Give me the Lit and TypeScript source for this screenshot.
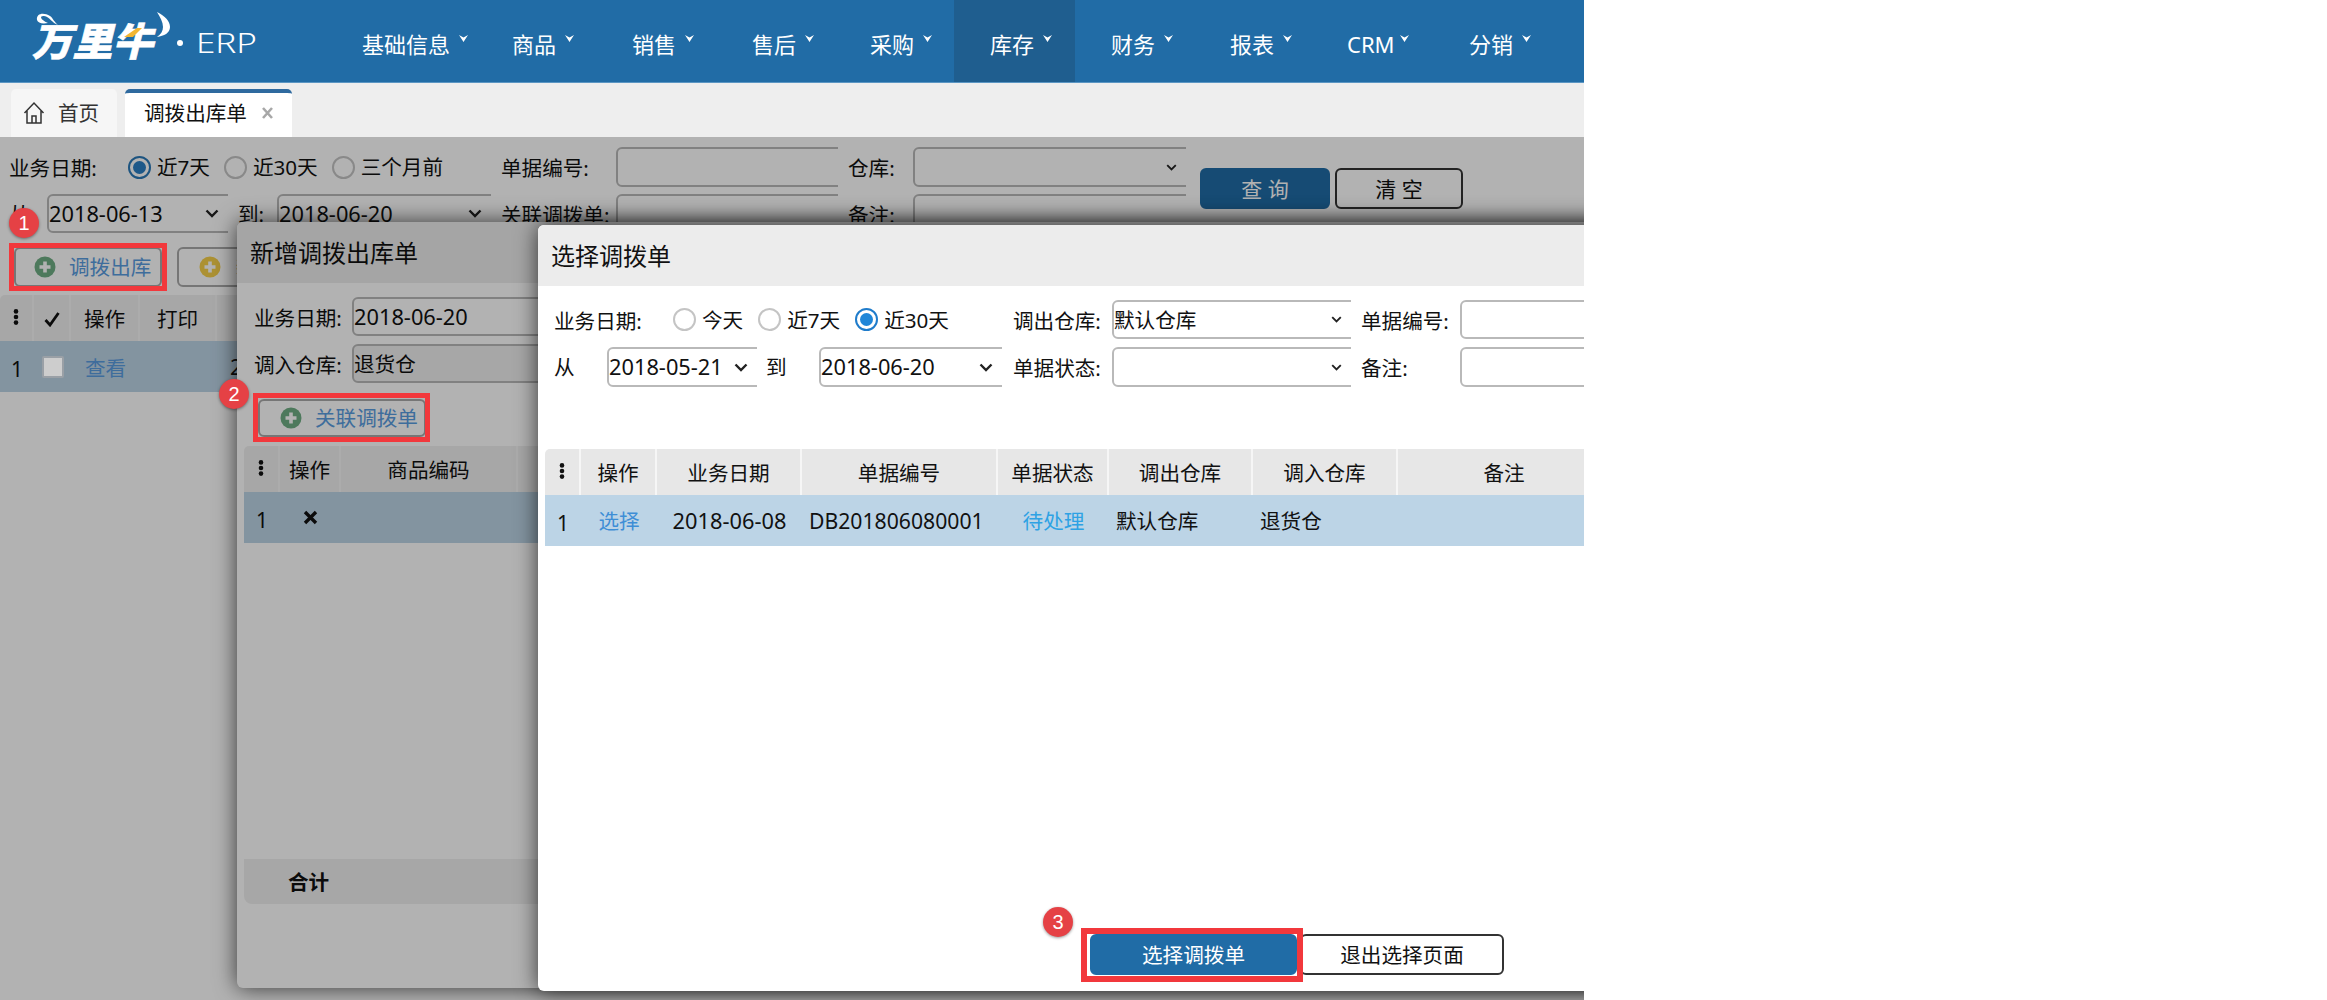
import { LitElement, html, css, svg } from "lit";
import { customElement } from "lit/decorators.js";

const NAV = [
  ["基础信息", 150], ["商品", 120], ["销售", 120], ["售后", 118], ["采购", 120],
  ["库存", 121], ["财务", 119], ["报表", 117], ["CRM", 122], ["分销", 120],
] as [string, number][];

const chev = (cls = "chev") => html`<svg class=${cls} viewBox="0 0 14 9"><path d="M1.5 1.5 7 7l5.5-5.5" fill="none" stroke="currentColor" stroke-width="2.4"/></svg>`;
const dots = html`<svg class="dots" viewBox="0 0 6 16"><circle cx="3" cy="2.4" r="2.3"/><circle cx="3" cy="8" r="2.3"/><circle cx="3" cy="13.6" r="2.3"/></svg>`;
const plus = (color: string) => html`<svg class="plus" viewBox="0 0 22 22"><circle cx="11" cy="11" r="10.5" fill=${color}/><path d="M11 5.5v11M5.5 11h11" stroke="#fff" stroke-width="3.6"/></svg>`;

@customElement("app-root")
export class AppRoot extends LitElement {
  static styles = css`
    :host { display: block; font-family: "Noto Sans", "Noto Sans CJK SC", sans-serif; font-size: 20.6px; line-height: 28px; color: #111; }
    * { box-sizing: border-box; }
    .root { position: relative; width: 1584px; height: 1000px; overflow: hidden; background: #fff; display: flex; flex-direction: column; }

    .header { height: 83px; flex: none; display: flex; background: #216ca6; border-bottom: 1px solid #5b96c3; color: #fff; }
    .brand { width: 326px; flex: none; display: flex; align-items: flex-start; }
    .logo { width: 280px; height: 70px; display: block; }
    .logo text { font-family: "Noto Sans CJK SC", sans-serif; }
    .nav { display: flex; }
    .nav-item { display: flex; padding: 29px 0 0 36px; font-size: 22px; line-height: 30px; }
    .nav-item.active { background: #1f5e8f; }
    .caret { width: 9px; height: 7px; margin: 6px 0 0 9px; flex: none; fill: #fff; }
    .caret.tight { margin-left: 5px; }

    .tabs { height: 54px; flex: none; background: #eee; display: flex; gap: 8px; padding: 6px 0 0 11px; }
    .tab { display: flex; align-items: center; border-radius: 5px 5px 0 0; }
    .tab.home { width: 106px; background: #f6f6f6; padding-left: 12px; gap: 13px; color: #333; }
    .tab.cur { width: 167px; background: #fff; border-top: 4px solid #2f6a9f; padding: 0 0 4px 19px; }
    .home-ico { width: 22px; height: 24px; }
    .close { margin-left: 14px; width: 13px; height: 14px; color: #a8a8a8; }

    .main { flex: 1; padding-top: 10px; }
    .pfilter { display: grid; grid-template-columns: 492px 115px 222px 10px 65px 273px auto; grid-template-rows: 40px 39px; row-gap: 7px; padding-left: 9px; }
    .dates { display: flex; align-items: center; }
    .lab { display: block; white-space: nowrap; align-self: center; padding-top: 2px; }
    .sp { grid-column: 4; }
    .radios { display: flex; align-items: center; gap: 14px; margin-left: 31px; }
    .radio { display: flex; align-items: center; gap: 6px; }
    .circle { width: 23px; height: 23px; border-radius: 50%; border: 2px solid #c4c4c4; background: #fff; flex: none; }
    .circle.on { border: 2px solid #1f7ccb; padding: 3px; }
    .circle.on::after { content: ""; display: block; width: 13px; height: 13px; border-radius: 50%; background: #1f86d8; }
    .circle.page.on { border-color: #2a79b8; }
    .circle.page.on::after { background: #2a7fc4; }

    .clip { overflow: hidden; }
    .box { height: 100%; width: calc(100% + 12px); border: 2px solid #b9b9b9; border-radius: 6px; background: #fff; display: flex; align-items: center; padding: 0 19px 0 0; justify-content: space-between; font-size: 21.8px; white-space: nowrap; }
    .box.cjk { font-size: 20.6px; }
    .box.off { background: #f0f0f0; }
    .chev { width: 14px; height: 9px; color: #222; flex: none; }
    .chev.thin { width: 11px; height: 7px; }
    .bb { margin-left: 14px; grid-column: 7; grid-row: 1 / span 2; display: flex; gap: 5px; align-items: flex-start; padding-top: 21px; }
    .btn { height: 41px; border-radius: 6px; border: 2px solid #333; background: #fff; display: flex; align-items: center; justify-content: center; flex: none; }
    .btn.pri { background: #206ca6; border-color: #206ca6; color: #fff; }
    .q { width: 130px; font-size: 21px; }
    .c { width: 128px; font-size: 21px; }

    .acts { display: flex; gap: 15px; margin: 14px 0 8px 14px; height: 40px; }
    .act { display: flex; align-items: center; gap: 13px; border: 2px solid #aaa; border-radius: 6px; background: #fff; color: #5a9ce0; padding-left: 18px; height: 100%; flex: none; }
    .act.w1 { width: 148px; }
    .act.w2 { width: 160px; color: #111; padding-left: 20px; gap: 15px; }
    .plus { width: 22px; height: 22px; flex: none; }

    .grid { display: grid; align-items: stretch; }
    .g1 { grid-template-columns: 34px 37px 69px 77px 1fr; }
    .g2 { grid-template-columns: 36px 61px 177px 1fr; }
    .g3 { grid-template-columns: 36px 76px 145px 196px 111px 144px 145px 214px; }
    .thead { height: 46px; background: #f0f0f0; border-radius: 5px 5px 0 0; }
    .g3.thead { background: #e7e7e7; }
    .thead > div { display: flex; align-items: center; justify-content: center; border-right: 2px solid #f6f6f6; padding-top: 2px; }
    .tbody { height: 51px; background: #bcd4e6; }
    .tbody > div { display: flex; align-items: center; justify-content: center; white-space: nowrap; overflow: hidden; }
    .tbody > .l { justify-content: flex-start; padding-left: 7px; }
    .tbody .num { font-size: 21.8px; }
    .tbody .db { font-size: 21.2px; }
    .link { color: #3e8ed6; }
    .link.p { color: #5a9ce0; padding-top: 2px; }
    .link.st { color: #2ea2e4; }
    .dots { width: 6px; height: 16px; fill: #111; margin-top: -5px; }
    .tick { width: 16px; height: 16px; }
    .cb { position: relative; z-index: 3; width: 22px; height: 22px; background: #cdcdcd; border: 2px solid #9aa0a6; border-radius: 2px; }
    .x { width: 15px; height: 15px; }
    .rownum { font-size: 21px; padding-top: 4px; }

    .overlay { position: absolute; left: 0; right: 0; top: 137px; bottom: 0; background: rgba(0, 0, 0, .3); z-index: 2; }
    .dlg { position: absolute; background: #fff; border-radius: 6px; box-shadow: 0 0 22px rgba(0, 0, 0, .7); display: flex; flex-direction: column; }
    .d1 { left: 237px; top: 222px; width: 1400px; height: 766px; z-index: 1; }
    .d2 { left: 538px; top: 225px; width: 1100px; height: 766px; z-index: 3; }
    .title { height: 61px; flex: none; background: #ececec; font-size: 24px; display: flex; align-items: center; padding-left: 13px; border-radius: 6px 6px 0 0; }
    .dform1 { display: grid; grid-template-columns: 98px 300px; grid-template-rows: 39px 39px; gap: 8px 0; margin: 14px 0 0 17px; }
    .act.a3 { width: 168px; height: 38px; margin: 16px 0 9px 21px; gap: 13px; padding-left: 20px; }
    .t1 { margin-left: 7px; }
    .sum { margin: auto 0 84px 7px; height: 45px; background: #f0f0f0; border-radius: 0 0 0 8px; padding: 0 0 0 44px; display: flex; align-items: center; font-weight: 700; }

    .dform2 { display: grid; grid-template-columns: 459px 99px 239px 10px 99px 140px; grid-template-rows: 39px 40px; row-gap: 8px; margin: 14px 0 0 16px; }
    .dates .from { width: 53px; flex: none; }
    .to2 { margin-left: 9px; width: 53px; flex: none; }
    .to1 { margin-left: 10px; width: 39px; flex: none; }
    .from1 { width: 38px; flex: none; }
    .s181 { width: 181px; height: 100%; flex: none; }
    .s214 { width: 214px; height: 100%; flex: none; }
    .s150 { width: 150px; height: 100%; flex: none; }
    .s183 { width: 183px; height: 100%; flex: none; }
    .radios.d { margin-left: 33px; gap: 15px; }
    .lbl4 { width: 86px; flex: none; }
    .t3 { margin: 62px 0 0 7px; }
    .foot { margin: auto 0 16px 552px; display: flex; gap: 3px; }
    .sel { width: 207px; }
    .ext { width: 204px; }

    .mark { position: absolute; border: 5px solid #f2383c; z-index: 4; }
    .m1 { left: 9px; top: 243px; width: 158px; height: 48px; }
    .m2 { left: 253px; top: 393px; width: 177px; height: 49px; }
    .m3 { left: 1081px; top: 928px; width: 222px; height: 54px; border-width: 6px; }
    .badge { position: absolute; width: 30px; height: 30px; border-radius: 50%; background: #e54145; color: #fff; z-index: 5; display: flex; align-items: center; justify-content: center; font-size: 20px; box-shadow: 0 1px 3px rgba(0, 0, 0, .4); font-family: "Liberation Sans", sans-serif; }
    .b1 { left: 9px; top: 208px; }
    .b2 { left: 219px; top: 379px; }
    .b3 { left: 1043px; top: 907px; }
  `;

  private logo() {
    return svg`
      <svg class="logo" viewBox="0 0 280 70">
        <path d="M37 20C36 13 44 12 50 16c3 2 4 6 8 9-6-2-8-8-14-9-4-.5-5 3 4 7-6 1-10 0-11-3z" fill="#fff"/>
        <g transform="translate(32 56) skewX(-14)">
          <text x="0" y="0" font-size="39" font-weight="900" fill="#fff" stroke="#fff" stroke-width=".6" textLength="121" lengthAdjust="spacingAndGlyphs">万里牛</text>
        </g>
        <path d="M124 37l13-9h5l-9 9z" fill="#f2b632"/>
        <path d="M157 12c8 4 13 9 13 15 0 6-6 9-13 10 4-3 6-6 6-10 0-5-3-10-6-15z" fill="#fff"/>
        <circle cx="180" cy="43" r="3" fill="#fff"/>
        <text x="196" y="53" font-size="28" fill="#fff" textLength="61" lengthAdjust="spacingAndGlyphs" style="font-family:'Noto Sans',sans-serif;font-weight:300">ERP</text>
      </svg>`;
  }

  render() {
    return html`
      <div class="root">
        <div class="header">
          <div class="brand">${this.logo()}</div>
          <div class="nav">
            ${NAV.map(([t, w]) => html`
              <div class="nav-item ${t === "库存" ? "active" : ""}" style="width:${w}px">
                <span>${t}</span>
                <svg class="caret ${t === "CRM" ? "tight" : ""}" viewBox="0 0 9 7"><path d="M0 0l4.5 2.4L9 0 4.5 7z"/></svg>
              </div>`)}
          </div>
        </div>
        <div class="tabs">
          <div class="tab home">
            <svg class="home-ico" viewBox="0 0 22 24" fill="none" stroke="#333" stroke-width="1.5"><path d="M1.5 12 11 2l9.5 10M4 10v12h14V10M9 22v-7h4v7"/></svg>
            <span>首页</span>
          </div>
          <div class="tab cur">
            <span>调拨出库单</span>
            <svg class="close" viewBox="0 0 13 14"><path d="M2 2l9 10M11 2 2 12" stroke="currentColor" stroke-width="2.6"/></svg>
          </div>
        </div>

        <div class="main">
          <div class="pfilter">
            <div class="dates">
              <span class="lab">业务日期:</span>
              <div class="radios">
                <label class="radio"><span class="circle page on"></span>近7天</label>
                <label class="radio"><span class="circle page"></span>近30天</label>
                <label class="radio"><span class="circle page"></span>三个月前</label>
              </div>
            </div>
            <span class="lab">单据编号:</span>
            <div class="clip"><div class="box"></div></div>
            <span class="sp"></span>
            <span class="lab">仓库:</span>
            <div class="clip"><div class="box"><span></span>${chev("chev thin")}</div></div>
            <div class="bb">
              <div class="btn pri q">查 询</div>
              <div class="btn c">清 空</div>
            </div>
            <div class="dates">
              <span class="from1">从</span>
              <div class="clip s181"><div class="box"><span>2018-06-13</span>${chev()}</div></div>
              <span class="to1">到:</span>
              <div class="clip s214"><div class="box"><span>2018-06-20</span>${chev()}</div></div>
            </div>
            <span class="lab">关联调拨单:</span>
            <div class="clip"><div class="box"></div></div>
            <span class="sp"></span>
            <span class="lab">备注:</span>
            <div class="clip"><div class="box"></div></div>
          </div>
          <div class="acts">
            <div class="act w1">${plus("#6fae84")}<span>调拨出库</span></div>
            <div class="act w2">${plus("#f6d04a")}<span>新增</span></div>
          </div>
          <div class="grid g1 thead">
            <div>${dots}</div>
            <div><svg class="tick" viewBox="0 0 16 16"><path d="M1.5 9 6 14 14.5 2" fill="none" stroke="#111" stroke-width="2.8"/></svg></div>
            <div>操作</div><div>打印</div><div></div>
          </div>
          <div class="grid g1 tbody">
            <div class="rownum">1</div>
            <div><span class="cb"></span></div>
            <div class="link p">查看</div><div></div>
            <div class="l num" style="padding-left:13px">2018-06-20</div>
          </div>
        </div>

        <div class="dlg d1">
          <div class="title">新增调拨出库单</div>
          <div class="dform1">
            <span class="lab">业务日期:</span>
            <div class="clip"><div class="box"><span>2018-06-20</span></div></div>
            <span class="lab">调入仓库:</span>
            <div class="clip"><div class="box cjk off"><span>退货仓</span></div></div>
          </div>
          <div class="act a3">${plus("#6fae84")}<span>关联调拨单</span></div>
          <div class="t1">
            <div class="grid g2 thead"><div>${dots}</div><div>操作</div><div>商品编码</div><div></div></div>
            <div class="grid g2 tbody">
              <div class="rownum">1</div>
              <div><svg class="x" viewBox="0 0 15 15"><path d="M2 2l11 11M13 2 2 13" stroke="#111" stroke-width="3.4"/></svg></div>
              <div></div><div></div>
            </div>
          </div>
          <div class="sum">合计</div>
        </div>

        <div class="overlay"></div>

        <div class="dlg d2">
          <div class="title">选择调拨单</div>
          <div class="dform2">
            <div class="dates">
              <span class="lab lbl4">业务日期:</span>
              <div class="radios d">
                <label class="radio"><span class="circle"></span>今天</label>
                <label class="radio"><span class="circle"></span>近7天</label>
                <label class="radio"><span class="circle on"></span>近30天</label>
              </div>
            </div>
            <span class="lab">调出仓库:</span>
            <div class="clip"><div class="box cjk"><span>默认仓库</span>${chev("chev thin")}</div></div>
            <span></span>
            <span class="lab">单据编号:</span>
            <div class="clip"><div class="box"></div></div>
            <div class="dates">
              <span class="from">从</span>
              <div class="clip s150"><div class="box"><span>2018-05-21</span>${chev()}</div></div>
              <span class="to2">到</span>
              <div class="clip s183"><div class="box"><span>2018-06-20</span>${chev()}</div></div>
            </div>
            <span class="lab">单据状态:</span>
            <div class="clip"><div class="box"><span></span>${chev("chev thin")}</div></div>
            <span></span>
            <span class="lab">备注:</span>
            <div class="clip"><div class="box"></div></div>
          </div>
          <div class="t3">
            <div class="grid g3 thead">
              <div>${dots}</div><div>操作</div><div>业务日期</div><div>单据编号</div><div>单据状态</div><div>调出仓库</div><div>调入仓库</div><div>备注</div>
            </div>
            <div class="grid g3 tbody">
              <div class="rownum">1</div>
              <div class="link">选择</div>
              <div class="num">2018-06-08</div>
              <div class="l db">DB201806080001</div>
              <div class="link st">待处理</div>
              <div class="l">默认仓库</div>
              <div class="l">退货仓</div>
              <div></div>
            </div>
          </div>
          <div class="foot">
            <div class="btn pri sel">选择调拨单</div>
            <div class="btn ext">退出选择页面</div>
          </div>
        </div>

        <div class="mark m1"></div>
        <div class="mark m2"></div>
        <div class="mark m3"></div>
        <div class="badge b1">1</div>
        <div class="badge b2">2</div>
        <div class="badge b3">3</div>
      </div>
    `;
  }
}
